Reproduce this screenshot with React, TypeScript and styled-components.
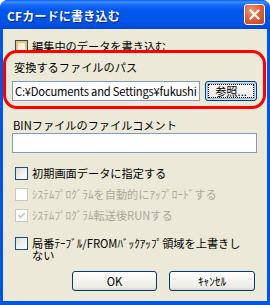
import styled, { createGlobalStyle } from 'styled-components';

const GlobalStyle = createGlobalStyle`
  html, body {
    margin: 0;
    padding: 0;
    background: #ffffff;
  }
  body {
    font-family: 'Noto Sans CJK JP', 'Noto Sans', sans-serif;
  }
`;

const Window = styled.div`
  width: 270px;
  height: 305px;
  display: flex;
  flex-direction: column;
  border-radius: 8px 8px 0 0;
  overflow: hidden;
  background: #0055ea;
`;

const TitleBar = styled.div`
  height: 29px;
  flex-shrink: 0;
  box-sizing: border-box;
  display: flex;
  align-items: center;
  justify-content: space-between;
  padding: 0 5px 0 7px;
  background: linear-gradient(
    to bottom,
    #0a5ef0 0%,
    #3d8fff 7%,
    #1a6bf8 16%,
    #0058ee 35%,
    #0054e6 75%,
    #0048d8 100%
  );
`;

const Title = styled.span`
  color: #ffffff;
  font-size: 12px;
  font-weight: 700;
  line-height: 14px;
  padding-top: 2px;
  text-shadow: 1px 1px 0 #0a1e8c;
  letter-spacing: 0.2px;
`;

const CloseButton = styled.div`
  width: 21px;
  height: 21px;
  box-sizing: border-box;
  border: 1px solid #ffffff;
  border-radius: 3px;
  background: radial-gradient(circle at 35% 30%, #f09a7c 0%, #e0603a 45%, #c8401c 100%);
  display: flex;
  align-items: center;
  justify-content: center;
`;

const Body = styled.div`
  flex: 1;
  margin: 0 3px 4px 3px;
  background: #ece9d8;
  padding: 11px 10px 0 9px;
  display: flex;
  flex-direction: column;
  font-size: 11.2px;
  line-height: 14px;
  color: #000000;
`;

const CheckRow = styled.label<{ $gap?: number; $disabled?: boolean }>`
  display: flex;
  align-items: flex-start;
  gap: 4px;
  padding-left: 3px;
  margin-top: ${({ $gap }) => $gap ?? 0}px;
  color: ${({ $disabled }) => ($disabled ? '#aca899' : '#000000')};
`;

const CheckBox = styled.span<{ $hover?: boolean; $disabled?: boolean }>`
  width: 13px;
  height: 13px;
  box-sizing: border-box;
  flex-shrink: 0;
  display: flex;
  align-items: center;
  justify-content: center;
  border: 1px solid ${({ $disabled }) => ($disabled ? '#cac8bb' : '#1c5180')};
  background: ${({ $disabled }) =>
    $disabled ? '#ffffff' : 'linear-gradient(135deg, #dcdcd7 0%, #f2f2ef 55%, #ffffff 100%)'};
  box-shadow: ${({ $hover }) => ($hover ? 'inset 0 0 0 2px #f9c15a' : 'none')};
`;

const CheckText = styled.span<{ $lh?: number }>`
  line-height: ${({ $lh }) => $lh ?? 13}px;
  white-space: nowrap;
`;

const Group = styled.div`
  position: relative;
  margin-top: 7px;
  display: flex;
  flex-direction: column;

  &::before {
    content: '';
    position: absolute;
    top: -10px;
    bottom: -8px;
    left: -9px;
    right: -9px;
    border: 3px solid #ff0000;
    border-radius: 14px;
    pointer-events: none;
  }
`;

const FieldLabel = styled.div<{ $gap?: number; $indent?: number }>`
  margin-top: ${({ $gap }) => $gap ?? 0}px;
  padding-left: ${({ $indent }) => $indent ?? 1}px;
  height: 14px;
  line-height: 14px;
  white-space: nowrap;
`;

const InputRow = styled.div`
  display: flex;
  gap: 5px;
  margin-top: 7px;
`;

const TextBox = styled.div<{ $gap?: number; $grow?: boolean }>`
  flex: ${({ $grow }) => ($grow ? '1 1 0' : '0 0 auto')};
  min-width: 0;
  height: 20px;
  box-sizing: border-box;
  margin-top: ${({ $gap }) => $gap ?? 0}px;
  border: 1px solid #7f9db9;
  background: #ffffff;
  padding: 0 2px;
  overflow: hidden;
  white-space: nowrap;
  line-height: 18px;
  font-size: 11.2px;
  letter-spacing: -0.2px;
`;

const PushButton = styled.div<{ $width: number; $focused?: boolean }>`
  width: ${({ $width }) => $width}px;
  height: 20px;
  box-sizing: border-box;
  flex-shrink: 0;
  display: flex;
  align-items: center;
  justify-content: center;
  border: 1px solid #003c74;
  border-radius: 3px;
  background: linear-gradient(to bottom, #ffffff 0%, #f5f4f0 45%, #ecebe6 85%, #d6d0c5 100%);
  box-shadow: ${({ $focused }) =>
    $focused ? 'inset 0 0 0 1px #cee7ff, inset 0 0 0 2px #98b8ea' : 'none'};
  outline: ${({ $focused }) => ($focused ? '1px dotted #000000' : 'none')};
  outline-offset: -4px;
  font-size: 11.2px;
  line-height: 14px;
`;

const ButtonRow = styled.div`
  display: flex;
  justify-content: flex-end;
  gap: 12px;
  margin-top: 10px;
  padding-right: 2px;
`;

function CheckMark({ color }: { color: string }) {
  return (
    <svg width="9" height="9" viewBox="0 0 9 9">
      <polyline points="1.5,4.2 3.5,6.5 7.8,2" fill="none" stroke={color} strokeWidth="1.8" />
    </svg>
  );
}

export default function App() {
  return (
    <>
      <GlobalStyle />
      <Window>
        <TitleBar>
          <Title>CFカードに書き込む</Title>
          <CloseButton>
            <svg width="13" height="13" viewBox="0 0 13 13">
              <path d="M2.5 2.5 L10.5 10.5 M10.5 2.5 L2.5 10.5" stroke="#ffffff" strokeWidth="2.2" strokeLinecap="square" />
            </svg>
          </CloseButton>
        </TitleBar>
        <Body>
          <CheckRow>
            <CheckBox $hover />
            <CheckText>編集中のデータを書き込む</CheckText>
          </CheckRow>

          <Group>
            <FieldLabel $indent={2}>変換するファイルのパス</FieldLabel>
            <InputRow>
              <TextBox $grow>C:¥Documents and Settings¥fukushi</TextBox>
              <PushButton $width={52} $focused>参照...</PushButton>
            </InputRow>
          </Group>

          <FieldLabel $gap={17}>BINファイルのファイルコメント</FieldLabel>
          <TextBox $gap={1} />

          <CheckRow $gap={14}>
            <CheckBox />
            <CheckText>初期画面データに指定する</CheckText>
          </CheckRow>
          <CheckRow $gap={8} $disabled>
            <CheckBox $disabled />
            <CheckText>ｼｽﾃﾑﾌﾟﾛｸﾞﾗﾑを自動的にｱｯﾌﾟﾛｰﾄﾞする</CheckText>
          </CheckRow>
          <CheckRow $gap={8} $disabled>
            <CheckBox $disabled>
              <CheckMark color="#cac8bb" />
            </CheckBox>
            <CheckText>ｼｽﾃﾑﾌﾟﾛｸﾞﾗﾑ転送後RUNする</CheckText>
          </CheckRow>
          <CheckRow $gap={15}>
            <CheckBox />
            <CheckText $lh={12}>
              局番ﾃｰﾌﾞﾙ/FROMﾊﾞｯｸｱｯﾌﾟ領域を上書きし
              <br />
              ない
            </CheckText>
          </CheckRow>

          <ButtonRow>
            <PushButton $width={85}>OK</PushButton>
            <PushButton $width={86}>ｷｬﾝｾﾙ</PushButton>
          </ButtonRow>
        </Body>
      </Window>
    </>
  );
}
